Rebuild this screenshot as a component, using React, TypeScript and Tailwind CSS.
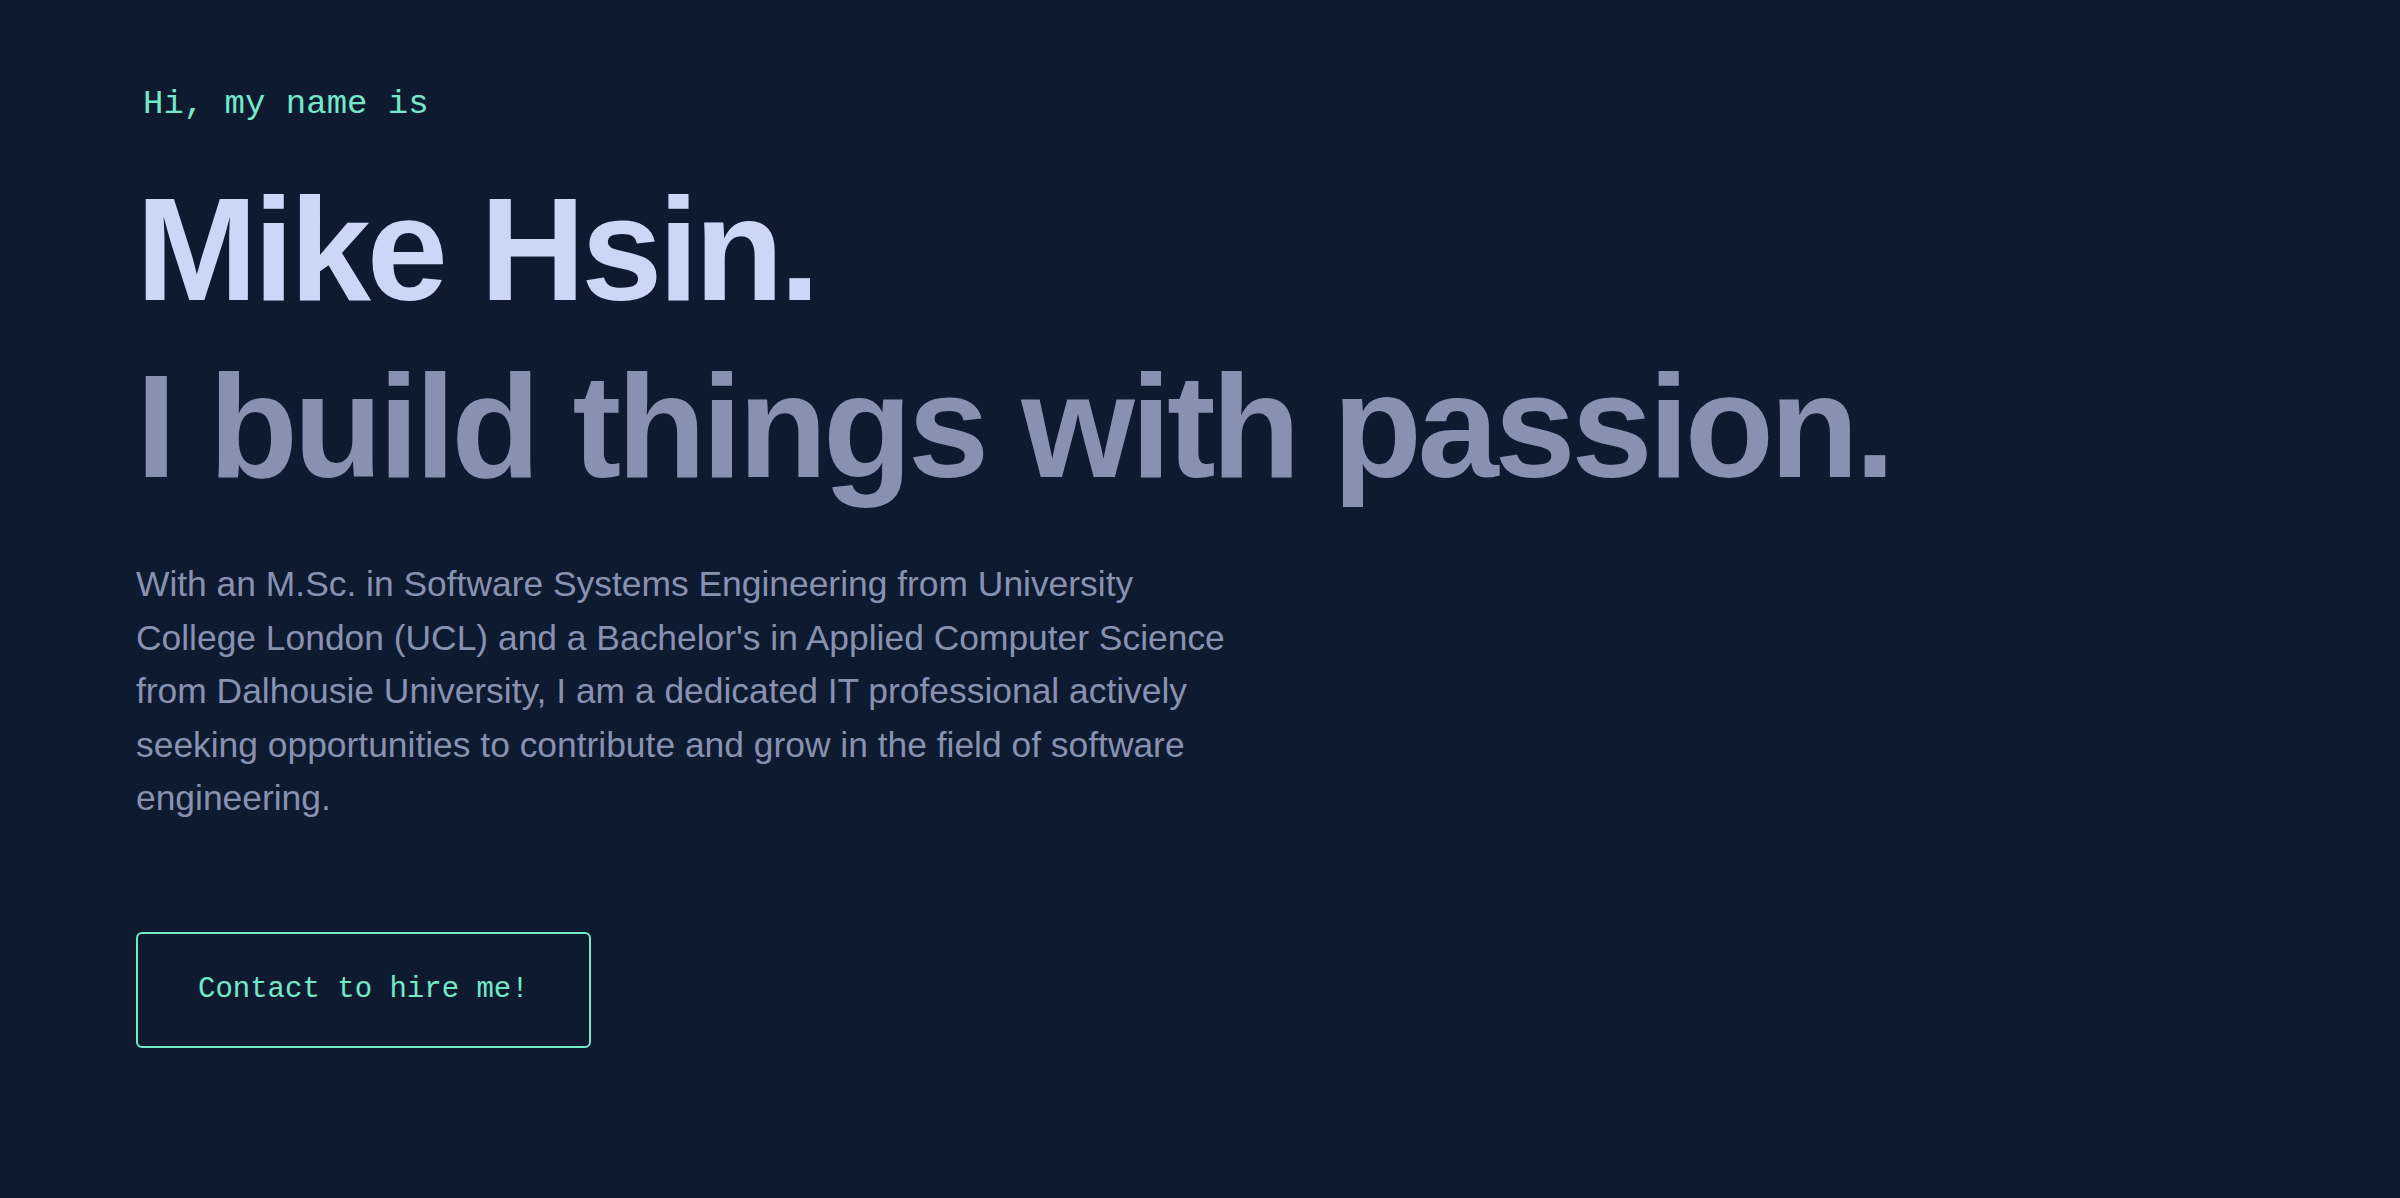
import React from 'react'

const mono = { fontFamily: '"Liberation Mono", "DejaVu Sans Mono", monospace' }

function Hero() {
  return (
    <section className="flex flex-col items-start pl-[136px] pt-[84px]">
      {/* intro */}
      <p className="pl-[7px] text-[34px] leading-[40px] text-[#72e9c9]" style={mono}>
        Hi, my name is
      </p>

      {/* big headings */}
      <h1 className="mt-[46px] text-[146px] leading-[1.1] font-bold tracking-[-0.029em] text-[#ccd6f6]">
        Mike Hsin.
      </h1>
      <h2 className="mt-[16px] text-[146px] leading-[1.1] font-bold tracking-[-0.029em] text-[#8892b0]">
        I build things with passion.
      </h2>

      {/* blurb */}
      <p className="mt-[51px] max-w-[1120px] text-[35.4px] leading-[53.5px] text-[#8892b0]">
        With an M.Sc. in Software Systems Engineering from University College London (UCL) and a
        Bachelor's in Applied Computer Science from Dalhousie University, I am a dedicated IT
        professional actively seeking opportunities to contribute and grow in the field of
        software engineering.
      </p>

      {/* cta */}
      <a
        href="#contact"
        className="mt-[106px] flex h-[116px] items-center rounded-[6px] border-2 border-[#72e9c9] px-[60px] text-[29px] text-[#72e9c9] hover:bg-[#72e9c9]/10"
        style={mono}
      >
        Contact to hire me!
      </a>
    </section>
  )
}

export default function App() {
  return (
    <div className="min-h-screen bg-[#0e1a30] font-['Liberation_Sans',Arial,sans-serif]">
      <Hero />
    </div>
  )
}
